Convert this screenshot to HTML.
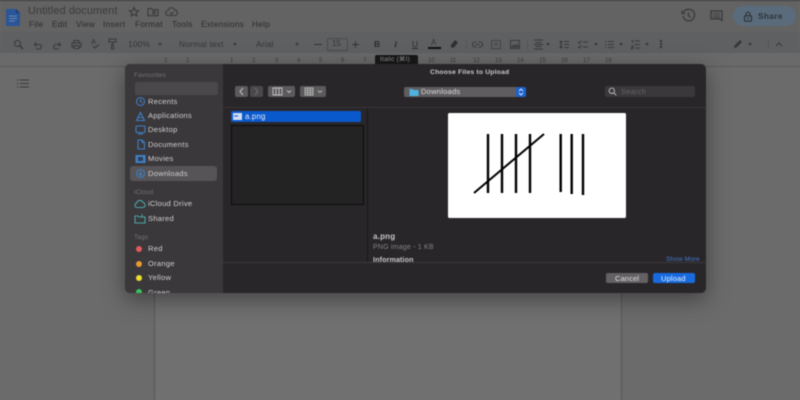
<!DOCTYPE html>
<html><head><meta charset="utf-8"><style>
html,body{margin:0;padding:0;background:#6c6c6c}
#r{position:relative;width:800px;height:400px;overflow:hidden;background:#6b6b6b;font-family:"Liberation Sans",sans-serif;filter:blur(.45px)}
#r div,#r span,#r svg{position:absolute}
.t{white-space:nowrap;line-height:1}
.m{font-size:8.3px;color:#2c2c2c;top:20px;letter-spacing:.25px}
.b{font-size:8.3px;color:#363636;top:40px;letter-spacing:.2px}
.n{font-size:6px;color:#3a3a3a;top:58px}
.s{font-size:7.6px;color:#d0cfd0;left:148px;letter-spacing:.25px}
.h{font-size:6.4px;color:#747274;left:134px;letter-spacing:.2px}
.d{width:6px;height:6px;border-radius:50%;left:136px}
.i{fill:none;stroke:#3a3a3a;stroke-width:1.1}
.u{fill:none;stroke:#3f7fc4;stroke-width:1.1}
.a{width:0;height:0;border-left:2.5px solid transparent;border-right:2.5px solid transparent;border-top:3px solid #3a3a3a;top:43px}
.v{width:1px;background:#565656}
.btn{background:#5c5a5c;border-radius:2px}
</style></head><body><div id="r">
<div style="left:0;top:0;width:800px;height:1px;background:#3c3c3c"></div>
<div style="left:0;top:1px;width:800px;height:31px;background:#636363"></div>
<div style="left:0;top:32px;width:800px;height:21px;background:#5e6062"></div>
<div style="left:0;top:53px;width:800px;height:13px;background:#6a6a6a"></div>
<div style="left:0;top:66px;width:800px;height:1px;background:#585858"></div>
<div style="left:154px;top:67px;width:468px;height:333px;background:#707070"></div>
<div class="v" style="left:154px;top:280px;height:120px"></div>
<div class="v" style="left:621px;top:280px;height:120px"></div>

<svg style="left:5px;top:8px" width="16" height="19" viewBox="0 0 16 19"><path d="M1 1h10l4 4v13H1z" fill="#2a5596"/><path d="M11 1v4h4z" fill="#1d3d70"/><path d="M4 8h8M4 10.500h8M4 13h6" stroke="#7d97c0" stroke-width=".8"/></svg>
<span class="t" style="left:28px;top:5.500px;font-size:10.800px;color:#3a3a3a;letter-spacing:.15px">Untitled document</span>
<svg class="i" style="left:128px;top:6px" width="12" height="12" viewBox="0 0 12 12"><path d="M6 1.500l1.300 3 3.200.3-2.400 2.100.7 3.100L6 8.400 3.200 10l.7-3.100L1.500 4.800l3.200-.3z"/></svg>
<svg class="i" style="left:147px;top:7px" width="12" height="10" viewBox="0 0 12 10"><path d="M1 1.500h3.500l1 1.200H11v6H1z"/><circle cx="7" cy="5.500" r="1.300"/></svg>
<svg class="i" style="left:165px;top:7px" width="13" height="10" viewBox="0 0 13 10"><path d="M3.500 8.500a2.500 2.500 0 0 1-.4-5 3.400 3.400 0 0 1 6.500-.6 2.800 2.800 0 0 1 .2 5.600z"/><path d="M5 6l1.300 1.200L8.500 5"/></svg>
<span class="t m" style="left:29px">File</span><span class="t m" style="left:52px">Edit</span><span class="t m" style="left:76px">View</span><span class="t m" style="left:103px">Insert</span><span class="t m" style="left:135px">Format</span><span class="t m" style="left:172px">Tools</span><span class="t m" style="left:201px">Extensions</span><span class="t m" style="left:252px">Help</span>

<svg class="i" style="left:681px;top:8px;stroke-width:1.300" width="15" height="15" viewBox="0 0 15 15"><path d="M2.500 4.500A5.800 5.800 0 1 1 2 8"/><path d="M1 2.500v3h3M7.500 4.500v3.300l2.300 1.300"/></svg>
<svg class="i" style="left:710px;top:10px;stroke-width:1.300" width="13" height="12" viewBox="0 0 13 12"><path d="M1 1h11v9.500l-2-1.700H1z"/><path d="M3 3.500h7M3 5.300h7M3 7h7" stroke-width=".7"/></svg>
<div style="left:733px;top:6px;width:63px;height:20px;border-radius:10px;background:#5a6c7c"></div>
<svg style="left:743px;top:11px" width="10" height="11" viewBox="0 0 10 11"><path d="M3 5V3.200a2 2 0 0 1 4 0V5" fill="none" stroke="#2b2f33" stroke-width="1"/><rect x="1.500" y="4.800" width="7" height="5.400" rx=".8" fill="none" stroke="#2b2f33" stroke-width="1.100"/><circle cx="5" cy="7.500" r=".9" fill="#2b2f33"/></svg>
<span class="t" style="left:758px;top:12px;font-size:8.400px;font-weight:bold;color:#2f3439;letter-spacing:.3px">Share</span>

<svg class="i" style="left:13px;top:39px" width="11" height="11" viewBox="0 0 11 11"><circle cx="4.500" cy="4.500" r="3"/><path d="M6.800 6.800l3.200 3.200" stroke-width="1.500"/></svg>
<svg class="i" style="left:33px;top:40px" width="10" height="10" viewBox="0 0 10 10"><path d="M1.500 4.500h5a2.300 2.300 0 0 1 0 4.500H3M3.500 2.500l-2 2 2 2"/></svg>
<svg class="i" style="left:52px;top:40px" width="10" height="10" viewBox="0 0 10 10"><path d="M8.500 4.500h-5a2.300 2.300 0 0 0 0 4.500H7M6.500 2.500l2 2-2 2"/></svg>
<svg class="i" style="left:71px;top:39px" width="11" height="11" viewBox="0 0 11 11"><path d="M3 3.500V1.500h5v2M3 8H1V4h9v4H8M3 6.500h5v3H3z"/></svg>
<span class="t" style="left:91px;top:38px;font-size:7.500px;color:#333">A</span>
<svg class="i" style="left:92px;top:44px" width="9" height="6" viewBox="0 0 9 6"><path d="M1 2l2 2 4-3.500"/></svg>
<svg class="i" style="left:108px;top:38px" width="9" height="12" viewBox="0 0 9 12"><path d="M1 1h7v3H1zM5 4v2.500H3.500v4.500h2V7"/></svg>
<span class="t b" style="left:128px">100%</span><div class="a" style="left:158px"></div>
<span class="t b" style="left:179px">Normal text</span><div class="a" style="left:233px"></div>
<span class="t b" style="left:256px">Arial</span><div class="a" style="left:295px"></div>
<div style="left:314px;top:44px;width:8px;height:1px;background:#333"></div>
<div style="left:327px;top:38px;width:19px;height:11px;border:1px solid #4a4a4a;border-radius:2px"></div>
<span class="t" style="left:332px;top:40px;font-size:7.800px;color:#333">15</span>
<div style="left:352px;top:44px;width:7px;height:1px;background:#333"></div><div style="left:355px;top:41px;width:1px;height:7px;background:#333"></div>
<span class="t" style="left:374px;top:39.500px;font-size:8.500px;font-weight:bold;color:#2d2d2d">B</span>
<span class="t" style="left:394px;top:39.500px;font-size:8.500px;font-style:italic;font-family:'Liberation Serif',serif;font-weight:bold;color:#2d2d2d">I</span>
<span class="t" style="left:412px;top:39.500px;font-size:8.500px;color:#2d2d2d;text-decoration:underline">U</span>
<span class="t" style="left:431px;top:39px;font-size:8px;color:#333">A</span><div style="left:428px;top:47px;width:13px;height:2px;background:#111"></div>
<svg style="left:449px;top:38px" width="11" height="11" viewBox="0 0 11 11"><path d="M2 7l4-5 3 2.500-4 5H2z" fill="#2f2f2f"/></svg>
<div class="v" style="left:466px;top:39px;height:10px"></div>
<svg class="i" style="left:472px;top:41px" width="11" height="7" viewBox="0 0 11 7"><path d="M4.500 1H3a2.500 2.500 0 0 0 0 5h1.500M6.500 1H8a2.500 2.500 0 0 1 0 5H6.500M3.500 3.500h4"/></svg>
<svg class="i" style="left:491px;top:40px" width="10" height="9" viewBox="0 0 10 9"><path d="M.5.500h9v8h-9zM3 3h4M3 5h4" stroke="#444"/></svg>
<svg class="i" style="left:510px;top:40px" width="10" height="9" viewBox="0 0 10 9"><path d="M.5.500h9v8h-9zM2 7l2-2 1.500 1.200L7 4.500 8.500 7z"/></svg>
<div class="v" style="left:527px;top:39px;height:10px"></div>
<svg class="i" style="left:534px;top:39px" width="9" height="11" viewBox="0 0 9 11"><path d="M0 1h9M1.500 3.500h6M0 5.500h9M1.500 7.500h6M0 10h9"/></svg><div class="a" style="left:546px"></div>
<svg class="i" style="left:559px;top:40px" width="10" height="9" viewBox="0 0 10 9"><path d="M2 1v7M.5 2.500L2 1l1.500 1.500M.5 6.500L2 8l1.500-1.500M5 1.500h5M5 4.500h5M5 7.500h5"/></svg>
<svg class="i" style="left:578px;top:40px" width="10" height="9" viewBox="0 0 10 9"><path d="M0 2l1.300 1.300L3.500.8M0 6.500l1.300 1.300 2.200-2.500M5 2h5M5 7h5"/></svg><div class="a" style="left:594px"></div>
<svg class="i" style="left:605px;top:40px" width="9" height="9" viewBox="0 0 9 9"><path d="M0 1.500h1.500M0 4.500h1.500M0 7.500h1.500M3 1.500h6M3 4.500h6M3 7.500h6"/></svg><div class="a" style="left:619px"></div>
<svg class="i" style="left:631px;top:39px" width="9" height="11" viewBox="0 0 9 11"><path d="M.5 1.500h1V4M.5 7h1.500v1.500H.5V10H2M3.500 2h5.500M3.500 5.500h5.500M3.500 9h5.500"/></svg><div class="a" style="left:645px"></div>
<div style="left:660px;top:40px;width:1.500px;height:1.500px;background:#333;box-shadow:0 3px 0 #333,0 6px 0 #333"></div>
<svg style="left:733px;top:39px" width="10" height="10" viewBox="0 0 10 10"><path d="M1 9l.5-2.500L7 1l2 2-5.500 5.500z" fill="#363636"/></svg><div class="a" style="left:748px"></div>
<div class="v" style="left:768px;top:39px;height:10px"></div>
<svg class="i" style="left:775px;top:42px" width="8" height="5" viewBox="0 0 8 5"><path d="M1 4l3-3 3 3"/></svg>

<span class="t n" style="left:164px">2</span><span class="t n" style="left:186px">1</span><span class="t n" style="left:230px">1</span><span class="t n" style="left:252px">2</span><span class="t n" style="left:275px">3</span><span class="t n" style="left:297px">4</span><span class="t n" style="left:319px">5</span><span class="t n" style="left:341px">6</span><span class="t n" style="left:363px">7</span>
<span class="t n" style="left:428px">10</span><span class="t n" style="left:450px">11</span><span class="t n" style="left:473px">12</span><span class="t n" style="left:495px">13</span><span class="t n" style="left:517px">14</span><span class="t n" style="left:539px">15</span><span class="t n" style="left:561px">16</span><span class="t n" style="left:583px">17</span><span class="t n" style="left:605px">18</span>
<div style="left:375px;top:55px;width:43px;height:12px;background:#161616;border-radius:2px"></div>
<span class="t" style="left:380px;top:57px;font-size:6.500px;color:#9a9a9a;letter-spacing:.2px">Italic (⌘I)</span>

<svg class="i" style="left:17px;top:79px;stroke:#3a3a3a" width="12" height="9" viewBox="0 0 12 9"><path d="M0 1h1.500M0 4.500h1.500M0 8h1.500M3 1h9M3 4.500h9M3 8h9"/></svg>

<!-- dialog -->
<div style="left:125px;top:64px;width:581px;height:229px;border-radius:5px;background:#29262a;box-shadow:0 6px 22px rgba(30,30,30,.55);overflow:hidden">
 <div style="left:0;top:0;width:98px;height:229px;background:#3a383a"></div>
 <div style="left:98px;top:43px;width:483px;height:1px;background:#39363a"></div>
 <div style="left:98px;top:198px;width:483px;height:1px;background:#3c393d"></div>
 <div style="left:242px;top:44px;width:1px;height:154px;background:#19171a"></div>
 <div style="left:10px;top:18px;width:83px;height:13px;background:#4a484a;border-radius:2px"></div>
 <div style="left:5px;top:102px;width:87px;height:15px;background:#565456;border-radius:3px"></div>
 <div style="left:106px;top:47px;width:130px;height:11px;background:#0a59cc;border-radius:2px"></div>
 <div style="left:106px;top:61px;width:131px;height:78px;background:#232323;border:1px solid #0c0c0c"></div>
</div>
<span class="t h" style="top:73px">Favourites</span>
<svg class="u" style="left:135px;top:96px" width="11" height="11" viewBox="0 0 11 11"><circle cx="5.500" cy="5.500" r="4"/><path d="M5.500 3v2.700l1.800 1"/></svg>
<svg class="u" style="left:135px;top:111px" width="11" height="11" viewBox="0 0 11 11"><path d="M5.500 1.500l4 8h-8zM3.500 6.500h4"/></svg>
<svg class="u" style="left:135px;top:125px" width="11" height="10" viewBox="0 0 11 10"><rect x="1" y="1" width="9" height="6.500" rx="1"/><path d="M3 9h5"/></svg>
<svg class="u" style="left:136px;top:139px" width="10" height="11" viewBox="0 0 10 11"><path d="M2 1h4l2.500 2.500V10H2zM6 1v2.500h2.500"/></svg>
<svg class="u" style="left:135px;top:154px" width="11" height="10" viewBox="0 0 11 10"><rect x="1" y="1.500" width="9" height="7" fill="#3f7fc4"/><rect x="3" y="3" width="5" height="4" fill="#2d3f55" stroke="none"/></svg>
<svg class="u" style="left:135px;top:168px" width="11" height="11" viewBox="0 0 11 11"><circle cx="5.500" cy="5.500" r="4"/><path d="M5.500 3v4.500M3.700 5.800l1.800 1.700 1.800-1.700"/></svg>
<span class="t s" style="top:97.500px">Recents</span><span class="t s" style="top:112px">Applications</span><span class="t s" style="top:126px">Desktop</span><span class="t s" style="top:141px">Documents</span><span class="t s" style="top:155px">Movies</span><span class="t s" style="top:169.500px">Downloads</span>
<span class="t h" style="top:190px">iCloud</span>
<svg class="u" style="left:134px;top:199px;stroke:#4aa3a8" width="12" height="10" viewBox="0 0 12 10"><path d="M3 8.500a2.300 2.300 0 0 1-.3-4.500 3.300 3.300 0 0 1 6.300-.5 2.600 2.600 0 0 1 .3 5z"/></svg>
<svg class="u" style="left:134px;top:213px;stroke:#4aa3a8" width="12" height="11" viewBox="0 0 12 11"><path d="M1 3h3l1 1h6v6H1zM8 1v3"/></svg>
<span class="t s" style="top:200px">iCloud Drive</span><span class="t s" style="top:214.500px">Shared</span>
<span class="t h" style="top:235px">Tags</span>
<div class="d" style="top:246px;background:#e35a5c"></div><div class="d" style="top:261px;background:#e89a2e"></div><div class="d" style="top:275px;background:#ecdf2f"></div>
<span class="t s" style="top:245px">Red</span><span class="t s" style="top:260px">Orange</span><span class="t s" style="top:274px">Yellow</span>
<div style="left:125px;top:284px;width:98px;height:9px;overflow:hidden"><div class="d" style="left:11px;top:5px;background:#3cc05a"></div><span class="t s" style="left:23px;top:4.500px">Green</span></div>

<span class="t" style="left:430px;top:69.500px;font-size:6.800px;font-weight:bold;color:#c8c7c8;letter-spacing:.17px">Choose Files to Upload</span>
<div class="btn" style="left:235px;top:86px;width:13px;height:11px"></div><div class="btn" style="left:250px;top:86px;width:13px;height:11px;background:#4a484a"></div>
<svg style="left:238px;top:87px;fill:none;stroke:#c4c4c4;stroke-width:1" width="7" height="9" viewBox="0 0 7 9"><path d="M5 1L2 4.500 5 8"/></svg>
<svg style="left:253px;top:87px;fill:none;stroke:#6e6c6e;stroke-width:1" width="7" height="9" viewBox="0 0 7 9"><path d="M2 1l3 3.500L2 8"/></svg>
<div class="btn" style="left:268px;top:86px;width:27px;height:11px"></div><div class="btn" style="left:300px;top:86px;width:26px;height:11px"></div>
<svg style="left:272px;top:87px;fill:none;stroke:#c4c4c4;stroke-width:.9" width="21" height="9" viewBox="0 0 21 9"><path d="M1 1h9v7H1zM4 1v7M7 1v7M15 3.500l2 2 2-2"/></svg>
<svg style="left:304px;top:87px;fill:none;stroke:#b8b8b8;stroke-width:.9" width="20" height="9" viewBox="0 0 20 9"><path d="M1 1h8v7H1zM1 3.300h8M1 5.700h8M3.700 1v7M6.300 1v7M14 3.500l2 2 2-2"/></svg>
<div style="left:404px;top:87px;width:122px;height:10px;background:#5f5d5f;border-radius:2px"></div>
<div style="left:516px;top:87px;width:10px;height:10px;background:#1b62cf;border-radius:2px"></div>
<svg style="left:518px;top:88px;fill:none;stroke:#e4ecf8;stroke-width:.9" width="6" height="8" viewBox="0 0 6 8"><path d="M1 3l2-2 2 2M1 5l2 2 2-2"/></svg>
<svg style="left:409px;top:88px" width="10" height="8" viewBox="0 0 10 8"><path d="M.5 1h3l1 1h5v6h-9z" fill="#4fb2e0"/></svg>
<span class="t" style="left:421px;top:88px;font-size:7.600px;color:#dadada;letter-spacing:.2px">Downloads</span>
<div style="left:605px;top:86px;width:90px;height:11px;background:#3a383b;border-radius:2px"></div>
<svg style="left:608px;top:87px;fill:none;stroke:#c0c0c0;stroke-width:.9" width="9" height="9" viewBox="0 0 9 9"><circle cx="3.800" cy="3.800" r="2.700"/><path d="M5.800 5.800L8.300 8.300"/></svg>
<span class="t" style="left:621px;top:88px;font-size:7.400px;color:#666467;letter-spacing:.3px">Search</span>

<svg style="left:233px;top:113px" width="9" height="7" viewBox="0 0 9 7"><rect width="9" height="7" fill="#cfdcf2"/><rect x="1" y="2.500" width="4" height="1" fill="#0a59cc"/></svg>
<span class="t" style="left:245px;top:113px;font-size:7.800px;color:#e6ecf6;letter-spacing:.2px">a.png</span>

<div style="left:448px;top:113px;width:178px;height:105px;background:#fff;border-radius:1.500px"></div>
<svg style="left:448px;top:113px" width="178" height="105" viewBox="0 0 178 105"><g stroke="#000" fill="none"><path d="M40 21v59M54 21v59M68 21v59M82 21v59M112.700 21v58M123.700 21v60M135 21v61" stroke-width="2.400"/><path d="M26 80L96 21" stroke-width="2"/></g></svg>

<span class="t" style="left:373px;top:233px;font-size:8px;font-weight:bold;color:#c6c5c6;letter-spacing:.2px">a.png</span>
<span class="t" style="left:373px;top:244px;font-size:7px;color:#858386;letter-spacing:.2px">PNG image - 1 KB</span>
<div style="left:373px;top:255px;width:330px;height:7px;overflow:hidden">
 <span class="t" style="left:0;top:1px;font-size:7.200px;font-weight:bold;color:#c6c5c6;letter-spacing:.1px">Information</span>
 <span class="t" style="left:293px;top:2px;font-size:6.500px;color:#3f78c8;letter-spacing:.1px">Show More</span>
</div>
<div style="left:606px;top:273px;width:42px;height:10px;background:#636164;border-radius:2px"></div>
<span class="t" style="left:615px;top:274.500px;font-size:7.500px;color:#dedede;letter-spacing:.15px">Cancel</span>
<div style="left:653px;top:273px;width:42px;height:10px;background:#176bdf;border-radius:2px"></div>
<span class="t" style="left:661px;top:274.500px;font-size:7.500px;color:#e8f0fb;letter-spacing:.15px">Upload</span>
</div></body></html>
